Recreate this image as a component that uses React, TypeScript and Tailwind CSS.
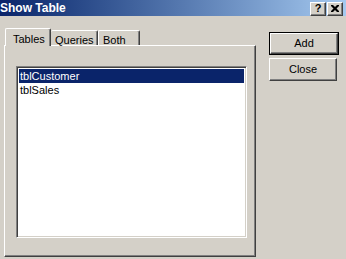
import React from "react";

const font = { fontFamily: '"Liberation Sans", Arial, sans-serif' };

function CaptionButton({ children }: { children: React.ReactNode }) {
  return (
    <div className="w-[16px] h-[14px] bg-[#d4d0c8] border border-t-white border-l-white border-r-[#404040] border-b-[#404040] shadow-[inset_-1px_-1px_0_#808080] flex items-center justify-center">
      {children}
    </div>
  );
}

function WinButton({ label, h }: { label: string; h: string }) {
  return (
    <div className={`w-[68px] ${h} bg-[#d4d0c8] border border-t-white border-l-white border-r-[#404040] border-b-[#404040] shadow-[inset_-1px_-1px_0_#808080] flex items-center justify-center text-[11px] text-black`}>
      {label}
    </div>
  );
}

export default function App() {
  return (
    <div className="w-[346px] h-[259px] bg-[#d4d0c8] overflow-hidden flex flex-col" style={font}>
      {/* title bar */}
      <div className="h-[16px] shrink-0 bg-gradient-to-r from-[#0a246a] to-[#a6caf0] flex items-center justify-between pr-[3px]">
        <span className="text-white font-bold text-[12px] leading-none">Show Table</span>
        <div className="flex gap-[1px] pt-[1px]">
          <CaptionButton>
            <span className="text-[11px] font-bold leading-none text-black">?</span>
          </CaptionButton>
          <CaptionButton>
            <svg width="8" height="7" viewBox="0 0 8 7">
              <path d="M0 0h2l2 2l2-2h2v1l-2.5 2.5L8 6v1H6L4 5L2 7H0V6l2.5-2.5L0 1z" fill="#000" />
            </svg>
          </CaptionButton>
        </div>
      </div>

      <div className="flex flex-1">
        {/* tab control */}
        <div className="ml-[4px] mt-[12px] w-[252px] flex flex-col">
          <div className="h-[17px] flex items-end relative z-10">
            <div className="ml-[1px] w-[46px] h-[18px] mb-[-1px] bg-[#d4d0c8] border-l border-t border-white border-r border-r-[#404040] shadow-[inset_-1px_0_0_#808080] rounded-t-[2px] flex items-start pl-[7px] pt-[2px] text-[11px] text-black">
              Tables
            </div>
            <div className="w-[47px] h-[15px] bg-[#d4d0c8] border-t border-t-white border-r border-r-[#404040] shadow-[inset_-1px_0_0_#808080] rounded-t-[2px] flex items-start pl-[4px] pt-[1px] text-[11px] text-black">
              Queries
            </div>
            <div className="w-[42px] h-[15px] bg-[#d4d0c8] border-l border-l-white border-t border-t-white border-r border-r-[#404040] shadow-[inset_-1px_0_0_#808080] rounded-t-[2px] flex items-start pl-[4px] pt-[1px] text-[11px] text-black">
              Both
            </div>
          </div>
          <div className="h-[212px] border-l border-t border-white border-r border-b border-r-[#404040] border-b-[#404040] shadow-[inset_-1px_-1px_0_#808080] pl-[11px] pt-[20px]">
            <div className="w-[231px] h-[172px] bg-white border border-t-[#808080] border-l-[#808080] border-r-white border-b-white shadow-[inset_1px_1px_0_#404040,inset_-1px_-1px_0_#d4d0c8] p-[2px] text-[11px] leading-[14px]">
              <div className="bg-[#0a246a] text-white pl-[1px] h-[14px]">tblCustomer</div>
              <div className="text-black pl-[1px] h-[14px]">tblSales</div>
            </div>
          </div>
        </div>

        {/* buttons */}
        <div className="ml-[13px] mt-[16px] flex flex-col gap-[3px]">
          <div className="border border-black w-[70px]">
            <WinButton label="Add" h="h-[21px]" />
          </div>
          <WinButton label="Close" h="h-[23px]" />
        </div>
      </div>
    </div>
  );
}
